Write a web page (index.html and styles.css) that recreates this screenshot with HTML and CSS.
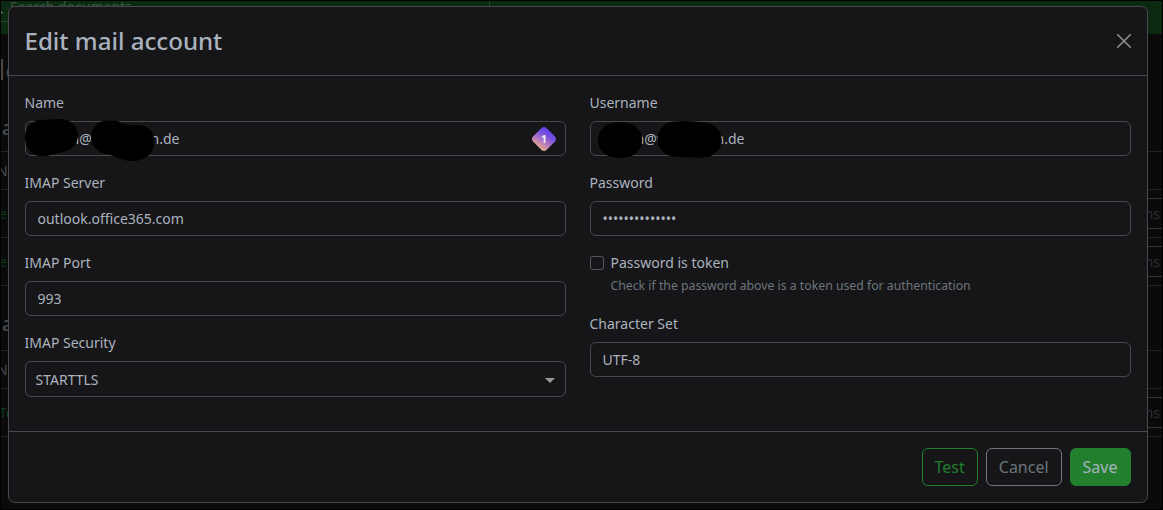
FILE: index.html
```html
<!DOCTYPE html>
<html lang="en">
<head>
<meta charset="utf-8">
<title>Edit mail account</title>
<link rel="stylesheet" href="styles.css">
</head>
<body>
<div class="page">
  <div class="navbar"><div class="search"><svg class="search-icon" width="12" height="12" viewBox="0 0 12 12"><circle cx="5" cy="5" r="4"/><path d="M8 8l3.5 3.5"/></svg><span>Search documents</span></div></div>
  <div class="page-title">le</div>
  <div class="section-title">a</div>
  <div class="table">
    <div class="table-head">N</div>
    <div class="table-row"><span>el</span><span class="row-button">ns</span></div>
    <div class="table-row"><span>el</span><span class="row-button">ns</span></div>
  </div>
  <div class="section-title second">a</div>
  <div class="table">
    <div class="table-head">N</div>
    <div class="table-row"><span>Te</span><span class="row-button">ns</span></div>
  </div>
</div>
<div class="modal">
  <header class="modal-header">
    <h4>Edit mail account</h4>
    <svg class="close" width="14" height="14" viewBox="0 0 14 14"><path d="M.7.7l12.6 12.6M13.3.7L.7 13.3"/></svg>
  </header>
  <div class="modal-body">
    <div class="column">
      <div class="field"><label>Name</label>
        <div class="input masked"><span class="tail-user">n@</span><span>n.de</span>
          <svg class="redaction" width="160" height="48" viewBox="0 0 160 48"><path d="M16 6L37 5A17 17 0 0 1 54 21A17 17 0 0 1 38 38L23 42A18 18 0 0 1 1 24A17 17 0 0 1 16 6ZM81 6.500L94 7C99 10 102 11 110 11C124 10 131 17 130 29C130 40 120 47 109 47C97 47 91 42 84 40A17 17 0 0 1 67 23A17 17 0 0 1 81 6.500Z"/></svg>
          <svg class="badge" width="26" height="26" viewBox="0 0 26 26"><defs><linearGradient id="g" x1="18" y1="4" x2="7" y2="22" gradientUnits="userSpaceOnUse"><stop offset="0" stop-color="#6644ed"/><stop offset=".25" stop-color="#724ee0"/><stop offset=".6" stop-color="#ae73c2"/><stop offset="1" stop-color="#edae8b"/></linearGradient></defs><path fill="url(#g)" d="M10.500 2Q13 0 15.500 2L24 10.500Q26 13 24 15.500L15.500 24Q13 26 10.500 24L2 15.500Q0 13 2 10.500Z"/><text x="13" y="17" text-anchor="middle">1</text></svg>
        </div></div>
      <div class="field"><label>IMAP Server</label><div class="input">outlook.office365.com</div></div>
      <div class="field"><label>IMAP Port</label><div class="input">993</div></div>
      <div class="field"><label>IMAP Security</label><div class="input select">STARTTLS<span class="arrow"></span></div></div>
    </div>
    <div class="column">
      <div class="field"><label>Username</label>
        <div class="input masked"><span class="tail-user">n@v</span><span>n.de</span>
          <svg class="redaction" width="160" height="48" viewBox="0 0 160 48"><path d="M23 9Q31 7 39 9A17.300 17.300 0 0 1 39 43Q31 45 23 43A17.300 17.300 0 0 1 23 9ZM86 7.500Q99 6 115 8.500A17.500 17.500 0 0 1 115 43.500Q100 44 86 42.500A17.500 17.500 0 0 1 86 7.500Z"/></svg>
        </div></div>
      <div class="field"><label>Password</label><div class="input">••••••••••••••</div></div>
      <div class="check"><span class="checkbox"></span><div><label>Password is token</label><p>Check if the password above is a token used for authentication</p></div></div>
      <div class="field"><label>Character Set</label><div class="input">UTF-8</div></div>
    </div>
  </div>
  <footer class="modal-footer">
    <button class="button test">Test</button>
    <button class="button cancel">Cancel</button>
    <button class="button save">Save</button>
  </footer>
</div>
</body>
</html>
```
FILE: styles.css
```css
* { box-sizing: border-box; }
body {
  margin: 0;
  width: 1163px;
  height: 510px;
  overflow: hidden;
  background: #000;
  color: #abb2bf;
  font: 14px/21px "Noto Sans", sans-serif;
  padding: 6px 15px 7px 8px;
}
.page {
  position: absolute;
  left: 1px;
  top: 1px;
  width: 1161px;
  height: 508px;
  overflow: hidden;
  background: #0a0a0a;
  color: #494c52;
}
.navbar { height: 33px; background: #0c2a12; color: #3a5540; }
.search {
  display: flex;
  gap: 7px;
  width: 489px;
  height: 21px;
  border: solid #294430;
  border-width: 0 1px 1px 0;
}
.search span { margin-top: -5px; }
.search-icon { margin: 1px 0 0 -10px; fill: none; stroke: #6a7a6d; stroke-width: 1.3; }
.page-title { height: 77px; padding-top: 14px; margin-left: -3px; font-size: 28px; line-height: 42px; }
.section-title { height: 40px; padding: 3px 0 0 1px; font-size: 20px; line-height: 28px; font-weight: 500; }
.second { height: 64px; padding-top: 24px; }
.table { border-top: 1px solid #222326; }
.table-head { height: 38px; padding: 8px 0; text-indent: -4px; border-bottom: 1px solid #222326; }
.table-row {
  display: flex;
  justify-content: space-between;
  height: 48px;
  padding: 8px 0;
  color: #103817;
  border-bottom: 1px solid #222326;
}
.table-row > span:first-child { margin: 5px 0 0 -2px; }
.row-button {
  width: 40px;
  height: 31px;
  padding: 4px 2px 0 0;
  text-align: right;
  color: #2b3036;
  border: solid #333437;
  border-width: 1px 0;
}
.modal {
  position: relative;
  display: flex;
  flex-direction: column;
  width: 1140px;
  height: 497px;
  background: #161618;
  border: 1px solid #47494d;
  border-radius: 7px;
}
.modal-header {
  display: flex;
  justify-content: space-between;
  align-items: center;
  height: 69px;
  padding: 0 16px 0 15.5px;
  border-bottom: 1px solid #47494d;
}
h4 { margin: 0; font-size: 24.1px; line-height: 36px; font-weight: 500; }
.close { fill: none; stroke: #939496; stroke-width: 1.5; stroke-linecap: round; }
.modal-body { flex: 1; display: grid; grid-template-columns: 1fr 1fr; gap: 24px; padding: 16px; }
.column { display: flex; flex-direction: column; }
.field { margin-bottom: 16px; }
label { display: block; margin-left: -0.5px; }
.field label { margin-bottom: 8px; }
.input {
  height: 35px;
  padding: 6px 11.5px;
  border: 1px solid #47494d;
  border-radius: 6px;
  white-space: nowrap;
}
.masked { position: relative; display: flex; padding-left: 44.5px; }
.tail-user { width: 80px; }
.redaction { position: absolute; left: -2px; top: -8px; fill: #000; }
.badge { position: absolute; right: 8px; top: 4px; }
.badge text { font: 700 11px "Noto Sans", sans-serif; fill: #eee; }
.select { display: flex; align-items: center; justify-content: space-between; height: 36px; padding: 6px 10px 6px 9.5px; }
.arrow { margin-top: 2px; border: solid transparent; border-width: 5px 5px 0; border-top-color: #999a9c; }
.check { display: flex; gap: 7px; height: 61px; }
.checkbox { width: 14px; height: 14px; margin-top: 4px; border: 1px solid #55575b; border-radius: 3px; }
.check p { margin: 2px 0 0 -0.5px; font-size: 12.25px; color: #6c757d; }
.modal-footer {
  display: flex;
  justify-content: flex-end;
  gap: 8px;
  height: 71px;
  padding: 16px;
  border-top: 1px solid #47494d;
}
.button {
  height: 38px;
  padding: 0 12.5px 0 11.5px;
  font: 16px/24px "Noto Sans", sans-serif;
  background: transparent;
  border: 1px solid #217f2e;
  border-radius: 6px;
}
.test { color: #217f2e; }
.cancel { color: #6c757d; border-color: #6c757d; }
.save { color: #abb2bf; background: #217f2e; }
```
